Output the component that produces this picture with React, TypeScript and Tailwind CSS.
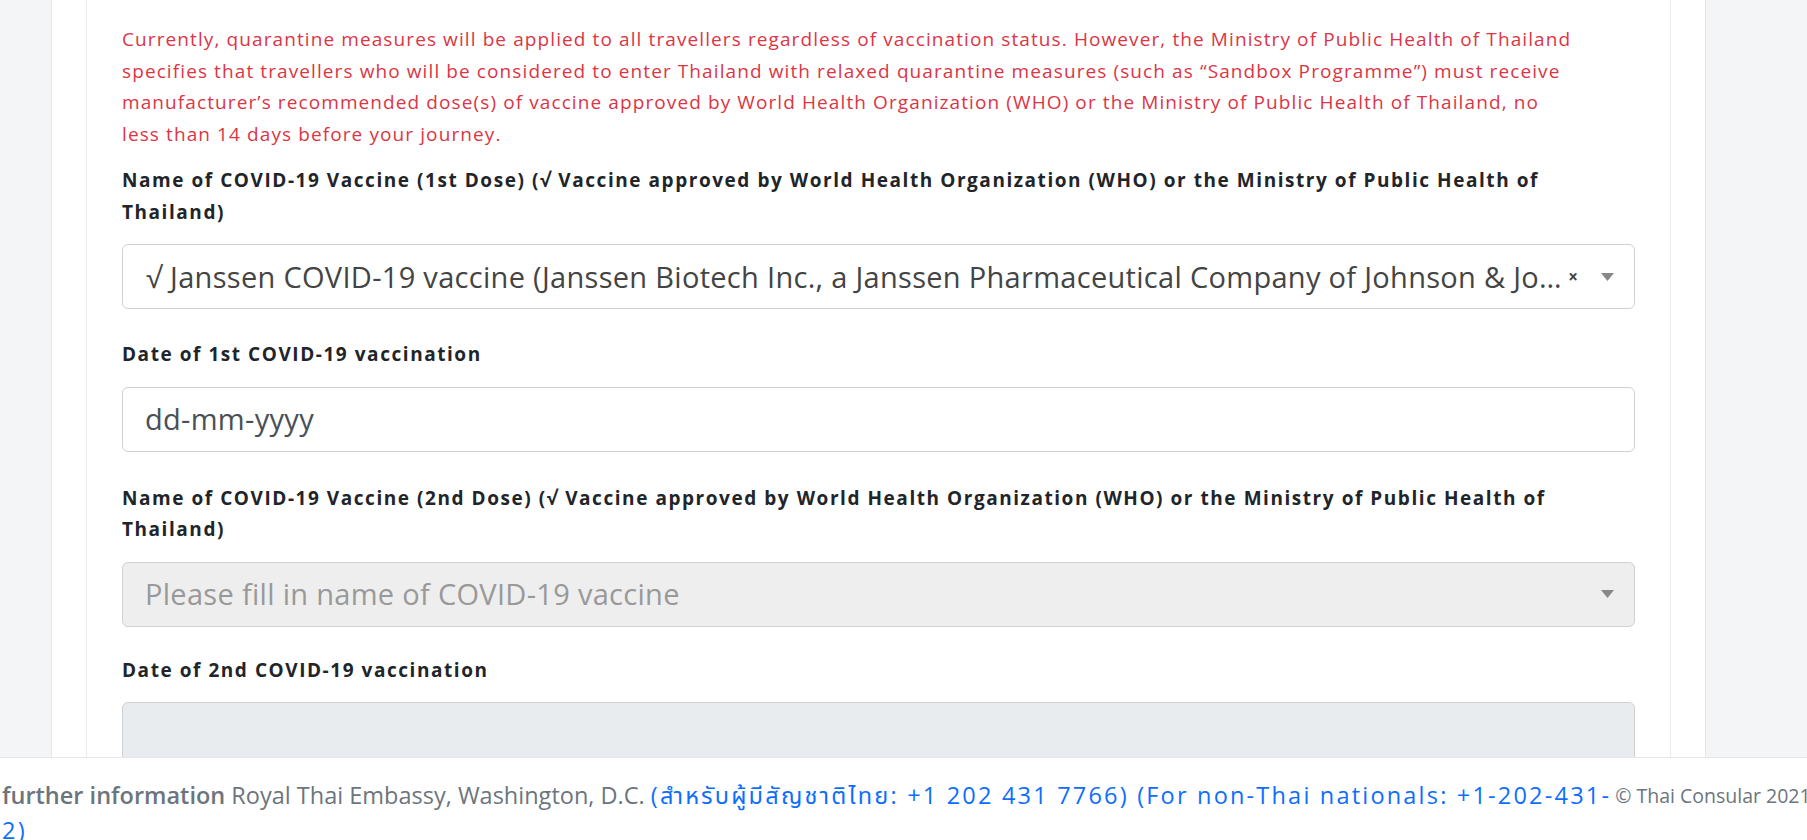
import React from "react";

const FONT = { fontFamily: '"Open Sans", "Noto Sans", "Noto Sans Thai", sans-serif' };

function Arrow() {
  return (
    <svg width="13" height="8" viewBox="0 0 13 8" className="shrink-0">
      <path d="M0 0 L13 0 L6.5 8 Z" fill="#888888" />
    </svg>
  );
}

function Label({ children }: { children: React.ReactNode }) {
  return (
    <div className="mb-[16px] text-[19px] font-bold leading-[31.5px] tracking-[1.55px] text-[#212529]">
      {children}
    </div>
  );
}

export default function App() {
  return (
    <div className="flex h-[840px] w-[1807px] flex-col overflow-hidden bg-[#f4f5f7]" style={FONT}>
      <div className="flex min-h-0 flex-1 overflow-hidden pl-[51px]">
        <div className="w-[1655px] border-x border-[#e4e6ea] bg-white px-[34px]">
          <div className="h-full border-x border-[#e9ecef] bg-white px-[35px] pt-[24px]">
            <p className="whitespace-nowrap text-[19px] font-medium leading-[31.5px] tracking-[1.1px] text-[#dc3545]">
              Currently, quarantine measures will be applied to all travellers regardless of vaccination status. However, the Ministry of Public Health of Thailand
              <br />
              specifies that travellers who will be considered to enter Thailand with relaxed quarantine measures (such as “Sandbox Programme”) must receive
              <br />
              manufacturer’s recommended dose(s) of vaccine approved by World Health Organization (WHO) or the Ministry of Public Health of Thailand, no
              <br />
              less than 14 days before your journey.
            </p>

            <div className="mt-[15px]">
              <Label>
                Name of COVID-19 Vaccine (1st Dose) (√ Vaccine approved by World Health Organization (WHO) or the Ministry of Public Health of
                <br />
                Thailand)
              </Label>
              <div className="flex h-[65px] items-center rounded-[6px] border border-[#d1d1d1] bg-white pl-[23px]">
                <span className="min-w-0 flex-1 truncate text-[29px] tracking-[0.3px] text-[#444444]">
                  √ Janssen COVID-19 vaccine (Janssen Biotech Inc., a Janssen Pharmaceutical Company of Johnson &amp; Johnson)
                </span>
                <span className="ml-[6px] shrink-0 text-[17px] font-bold leading-none text-[#444444]">×</span>
                <span className="ml-[23px] mr-[20px] flex items-center">
                  <Arrow />
                </span>
              </div>
            </div>

            <div className="mt-[30px]">
              <Label>Date of 1st COVID-19 vaccination</Label>
              <div className="flex h-[65px] items-center rounded-[6px] border border-[#d1d1d1] bg-white pl-[22px] text-[29px] tracking-[0.3px] text-[#495057]">
                dd-mm-yyyy
              </div>
            </div>

            <div className="mt-[31px]">
              <Label>
                Name of COVID-19 Vaccine (2nd Dose) (√ Vaccine approved by World Health Organization (WHO) or the Ministry of Public Health of
                <br />
                Thailand)
              </Label>
              <div className="flex h-[65px] items-center rounded-[6px] border border-[#d1d1d1] bg-[#eeeeee] pl-[22px]">
                <span className="min-w-0 flex-1 truncate text-[29px] tracking-[0.3px] text-[#999999]">
                  Please fill in name of COVID-19 vaccine
                </span>
                <span className="ml-[23px] mr-[20px] flex items-center">
                  <Arrow />
                </span>
              </div>
            </div>

            <div className="mt-[28px]">
              <Label>Date of 2nd COVID-19 vaccination</Label>
              <div className="h-[65px] rounded-[6px] border border-[#d1d1d1] bg-[#e9ecef]" />
            </div>
          </div>
        </div>
      </div>

      <footer className="flex h-[83px] shrink-0 items-start justify-between border-t border-[#e4e6ea] bg-white pl-[2px] pr-[6px] pt-[20px] text-[23.5px] leading-[35px]">
        <div className="whitespace-nowrap text-[#6c757d]">
          <span className="font-semibold">further information</span> Royal Thai Embassy, Washington, D.C.{" "}
          <span className="tracking-[2.2px] text-[#0d6efd]">
            (สำหรับผู้มีสัญชาติไทย: +1 202 431 7766) (For non-Thai nationals: +1-202-431-
            <br />
            2)
          </span>
        </div>
        <div className="ml-[4px] shrink-0 whitespace-nowrap text-[19.5px] text-[#6c757d]">© Thai Consular 2021</div>
      </footer>
    </div>
  );
}
